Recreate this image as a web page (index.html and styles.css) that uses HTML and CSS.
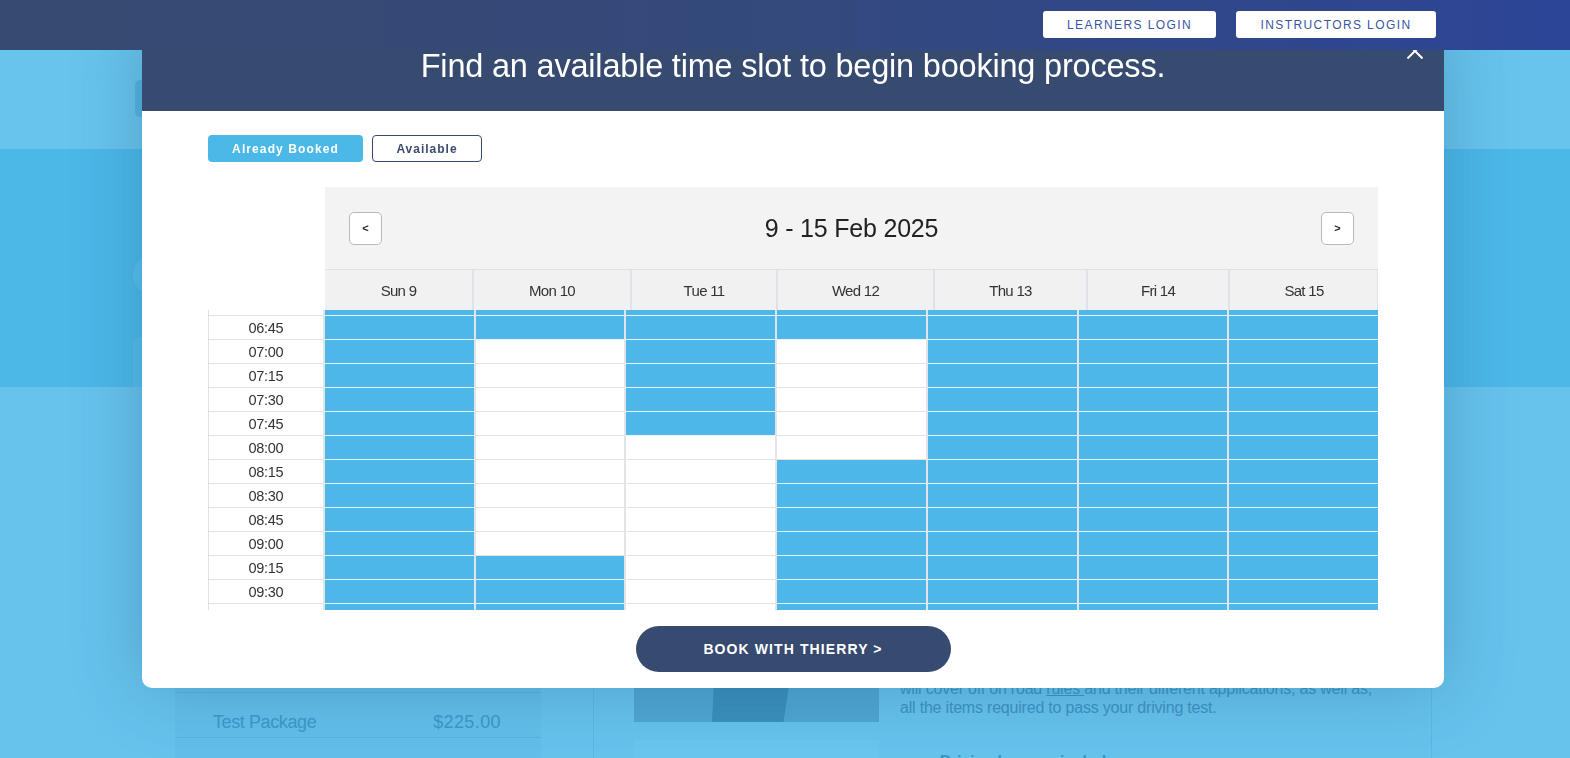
FILE: index.html
```html
<!DOCTYPE html>
<html lang="en">
<head>
<meta charset="utf-8">
<title>Book a lesson</title>
<link rel="stylesheet" href="styles.css">
</head>
<body>
<header class="topbar">
  <a class="login-btn learners" href="#">LEARNERS LOGIN</a>
  <a class="login-btn instructors" href="#">INSTRUCTORS LOGIN</a>
</header>

<main class="site">
  <section class="hero-top"><div class="logo-mark"></div></section>
  <section class="hero-band">
    <div class="avatar"></div>
    <div class="search-card"></div>
  </section>
  <section class="content">
    <div class="packages">
      <div class="pkg-row"><span>Lesson Package</span><span class="price">$65.00</span></div>
      <div class="pkg-row"><span>Test Package</span><span class="price">$225.00</span></div>
      <div class="pkg-row"></div>
    </div>
    <div class="about">
      <div class="media">
        <div class="photo"><div class="figure"></div></div>
        <div class="photo-2"></div>
      </div>
      <div class="about-text">
        <p>Thierry is a patient and experienced instructor whose lessons<br>will cover off on road <u>rules </u>and their different applications, as well as,<br>all the items required to pass your driving test.</p>
        <p class="list">• Driving lessons include:</p>
      </div>
    </div>
  </section>
</main>

<div class="modal">
  <button class="close" aria-label="Close">
    <svg width="16" height="16" viewBox="0 0 16 16"><path d="M0.5 0.5 L15.5 15.5 M15.5 0.5 L0.5 15.5" stroke="#fff" stroke-width="2" fill="none"/></svg>
  </button>
  <div class="modal-head">
    <h1>Find an available time slot to begin booking process.</h1>
  </div>
  <div class="modal-body">
    <div class="legend">
      <span class="tag booked-tag">Already Booked</span>
      <span class="tag free-tag">Available</span>
    </div>
    <div class="cal">
      <div class="cal-top">
        <div class="cal-nav">
          <button class="nav-btn">&lt;</button>
          <div class="cal-title">9 - 15 Feb 2025</div>
          <button class="nav-btn">&gt;</button>
        </div>
        <div class="days">
          <div class="day">Sun 9</div>
          <div class="day">Mon 10</div>
          <div class="day">Tue 11</div>
          <div class="day">Wed 12</div>
          <div class="day">Thu 13</div>
          <div class="day">Fri 14</div>
          <div class="day">Sat 15</div>
        </div>
      </div>
      <div class="cal-body">
        <div class="slots">
          <div class="time">06:30</div><div class="slot b"></div><div class="slot b"></div><div class="slot b"></div><div class="slot b"></div><div class="slot b"></div><div class="slot b"></div><div class="slot b"></div>
          <div class="time">06:45</div><div class="slot b"></div><div class="slot b"></div><div class="slot b"></div><div class="slot b"></div><div class="slot b"></div><div class="slot b"></div><div class="slot b"></div>
          <div class="time">07:00</div><div class="slot b"></div><div class="slot"></div><div class="slot b"></div><div class="slot"></div><div class="slot b"></div><div class="slot b"></div><div class="slot b"></div>
          <div class="time">07:15</div><div class="slot b"></div><div class="slot"></div><div class="slot b"></div><div class="slot"></div><div class="slot b"></div><div class="slot b"></div><div class="slot b"></div>
          <div class="time">07:30</div><div class="slot b"></div><div class="slot"></div><div class="slot b"></div><div class="slot"></div><div class="slot b"></div><div class="slot b"></div><div class="slot b"></div>
          <div class="time">07:45</div><div class="slot b"></div><div class="slot"></div><div class="slot b"></div><div class="slot"></div><div class="slot b"></div><div class="slot b"></div><div class="slot b"></div>
          <div class="time">08:00</div><div class="slot b"></div><div class="slot"></div><div class="slot"></div><div class="slot"></div><div class="slot b"></div><div class="slot b"></div><div class="slot b"></div>
          <div class="time">08:15</div><div class="slot b"></div><div class="slot"></div><div class="slot"></div><div class="slot b"></div><div class="slot b"></div><div class="slot b"></div><div class="slot b"></div>
          <div class="time">08:30</div><div class="slot b"></div><div class="slot"></div><div class="slot"></div><div class="slot b"></div><div class="slot b"></div><div class="slot b"></div><div class="slot b"></div>
          <div class="time">08:45</div><div class="slot b"></div><div class="slot"></div><div class="slot"></div><div class="slot b"></div><div class="slot b"></div><div class="slot b"></div><div class="slot b"></div>
          <div class="time">09:00</div><div class="slot b"></div><div class="slot"></div><div class="slot"></div><div class="slot b"></div><div class="slot b"></div><div class="slot b"></div><div class="slot b"></div>
          <div class="time">09:15</div><div class="slot b"></div><div class="slot b"></div><div class="slot"></div><div class="slot b"></div><div class="slot b"></div><div class="slot b"></div><div class="slot b"></div>
          <div class="time">09:30</div><div class="slot b"></div><div class="slot b"></div><div class="slot"></div><div class="slot b"></div><div class="slot b"></div><div class="slot b"></div><div class="slot b"></div>
          <div class="time">09:45</div><div class="slot b"></div><div class="slot b"></div><div class="slot"></div><div class="slot b"></div><div class="slot b"></div><div class="slot b"></div><div class="slot b"></div>
          <div class="time">10:00</div><div class="slot b"></div><div class="slot b"></div><div class="slot"></div><div class="slot b"></div><div class="slot b"></div><div class="slot b"></div><div class="slot b"></div>
        </div>
      </div>
    </div>
    <button class="book-btn">BOOK WITH THIERRY &gt;</button>
  </div>
</div>
</body>
</html>
```

FILE: styles.css
```css
* { box-sizing: border-box; }

html, body {
  margin: 0;
  padding: 0;
}

body {
  width: 1570px;
  height: 758px;
  overflow: hidden;
  background: #66c3ec;
  font-family: "Liberation Sans", Arial, sans-serif;
}

/* ---------- top bar ---------- */
.topbar {
  position: relative;
  z-index: 30;
  height: 50px;
  display: flex;
  justify-content: flex-end;
  align-items: flex-start;
  gap: 20px;
  padding: 11px 134px 0 0;
  background: linear-gradient(90deg, #374a70 0%, #34497c 50%, #2d4597 100%);
}

.login-btn {
  display: flex;
  align-items: center;
  justify-content: center;
  height: 27px;
  background: #fff;
  border-radius: 3px;
  color: #3a56a2;
  font-size: 12px;
  letter-spacing: 1.4px;
  text-decoration: none;
}
.learners { width: 173px; }
.instructors { width: 200px; }

/* ---------- background site ---------- */
.site {
  height: 708px;
  overflow: hidden;
}

.hero-top {
  height: 99px;
  padding: 30px 0 0 135px;
  background: #67c4ec;
}
.logo-mark {
  width: 14px;
  height: 37px;
  border-radius: 5px;
  background: #55b3df;
}

.hero-band {
  height: 238px;
  padding: 106px 0 0 133px;
  background: #4bb8e8;
  display: flex;
  flex-direction: column;
  gap: 42px;
}
.avatar {
  width: 40px;
  height: 40px;
  border-radius: 50%;
  background: #58bfec;
}
.search-card {
  width: 60px;
  flex: 1;
  border-radius: 8px 8px 0 0;
  background: #56bdea;
}

.content {
  display: flex;
  padding-left: 175px;
  height: 371px;
}

.packages {
  width: 366px;
  flex: none;
  margin-top: 261px;
  background: #62bfe9;
}
.pkg-row {
  height: 45px;
  display: flex;
  align-items: center;
  justify-content: space-between;
  padding: 14px 40px 0 38px;
  border-bottom: 1px solid #58b3de;
  color: #3e98c9;
  font-size: 18px;
  letter-spacing: -0.4px;
}
.pkg-row .price {
  letter-spacing: 0.4px;
}

.about {
  flex: none;
  margin-left: 52px;
  width: 839px;
  border-left: 1px solid #5bb8e2;
  border-right: 1px solid #5bb8e2;
  padding-left: 40px;
  display: flex;
  gap: 21px;
}
.media {
  width: 245px;
  flex: none;
  display: flex;
  flex-direction: column;
  gap: 18px;
}
.photo {
  flex: none;
  margin-top: 175px;
  height: 160px;
  background: #4fa7d2;
  display: flex;
  justify-content: center;
  align-items: flex-end;
}
.figure {
  width: 110px;
  height: 110px;
  margin-left: 10px;
  background: #3b8fbc;
  clip-path: polygon(10% 0, 85% 0, 70% 100%, 5% 100%);
}
.photo-2 {
  flex: none;
  height: 100px;
  background: #6ac6ee;
}
.about-text {
  color: #3d93c4;
  font-size: 16px;
  line-height: 19.5px;
  letter-spacing: -0.2px;
}
.about-text p {
  margin: 272px 0 0;
}
.about-text .list {
  margin: 34px 0 0 30px;
  font-weight: bold;
}

/* ---------- modal ---------- */
.modal {
  position: fixed;
  z-index: 20;
  left: 142px;
  top: 20px;
  width: 1302px;
  height: 668px;
  background: #fff;
  border-radius: 10px;
  overflow: hidden;
  box-shadow: 0 0 70px rgba(20, 70, 110, 0.28);
  display: flex;
  flex-direction: column;
}

.close {
  position: absolute;
  left: 1265px;
  top: 23px;
  width: 16px;
  height: 16px;
  padding: 0;
  border: 0;
  background: transparent;
  display: block;
}
.close svg { display: block; }

.modal-head {
  height: 91px;
  flex: none;
  background: #374a70;
  display: flex;
  align-items: center;
  justify-content: center;
  padding-top: 2px;
}
.modal-head h1 {
  margin: 0;
  color: #fff;
  font-size: 32.5px;
  font-weight: normal;
  letter-spacing: -0.2px;
}

.modal-body {
  padding: 24px 66px 16px;
  display: flex;
  flex-direction: column;
}

.legend {
  display: flex;
  gap: 9px;
}
.tag {
  height: 27px;
  display: flex;
  align-items: center;
  justify-content: center;
  border-radius: 4px;
  font-size: 12px;
  font-weight: bold;
  letter-spacing: 1.1px;
}
.booked-tag {
  width: 155px;
  background: #4cb8e8;
  color: #fff;
}
.free-tag {
  width: 110px;
  border: 1px solid #374a70;
  color: #3b4a6e;
  letter-spacing: 1px;
}

.cal {
  margin-top: 25px;
  width: 1170px;
}
.cal-top {
  margin-left: 117px;
}
.cal-nav {
  height: 82px;
  background: #f3f3f3;
  display: flex;
  align-items: center;
  justify-content: space-between;
  padding: 0 24px;
}
.nav-btn {
  width: 33px;
  height: 33px;
  background: #fff;
  border: 1px solid #b9b9b9;
  border-radius: 5px;
  font-family: "Liberation Sans", Arial, sans-serif;
  font-size: 11px;
  font-weight: bold;
  color: #222;
  padding: 0;
}
.cal-title {
  font-size: 25px;
  color: #222;
  letter-spacing: -0.2px;
}

.days {
  display: grid;
  grid-template-columns: 147px 158px 146px 157px 153px 142px 150px;
  height: 41px;
  background: #f1f1f1;
  border-top: 1px solid #dfe2e6;
  border-right: 1px solid #dfe2e6;
}
.day {
  display: flex;
  align-items: center;
  justify-content: center;
  font-size: 15px;
  color: #333;
  letter-spacing: -0.7px;
}
.day + .day {
  border-left: 2px solid #dfe2e6;
}

.cal-body {
  height: 300px;
  overflow: hidden;
}
.slots {
  margin-top: -18px;
  display: grid;
  grid-template-columns: 115px repeat(7, 1fr);
  grid-auto-rows: 24px;
}
.time {
  display: flex;
  align-items: center;
  justify-content: center;
  border-left: 1px solid #e0e2e5;
  border-bottom: 1px solid #e3e3e3;
  font-size: 14.5px;
  color: #333;
  letter-spacing: -0.3px;
  background: #fff;
}
.slot {
  background: #fff;
  border-left: 2px solid #e1e4e8;
  border-bottom: 1px solid #e3e3e3;
}
.slot.b {
  background: #4cb7e8;
  border-bottom-color: #e8f4fa;
}

.book-btn {
  margin: 16px auto 0;
  width: 315px;
  height: 46px;
  border: 0;
  border-radius: 23px;
  background: #374a70;
  color: #fff;
  font-family: "Liberation Sans", Arial, sans-serif;
  font-size: 14px;
  font-weight: bold;
  letter-spacing: 1.1px;
}
```
